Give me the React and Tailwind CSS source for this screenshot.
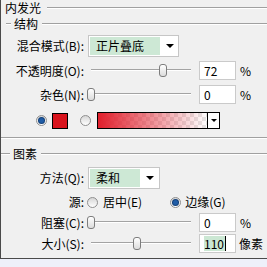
const Groove = ({ className = '' }) => (
  <div className={`h-[2px] border-t border-[#a0a0a0] border-b border-b-white ${className}`} />
);

const Radio = ({ checked }) => (
  <span className="w-[11px] h-[11px] rounded-full border border-[#8f8f8f] bg-linear-to-b from-[#d6d6d6] to-white flex items-center justify-center shrink-0">
    {checked && <span className="w-[5px] h-[5px] rounded-full bg-[#1f5ca6] ring-1 ring-[#123f78]" />}
  </span>
);

const Slider = ({ pos }) => (
  <div className="relative w-[100px] h-[13px] ml-[7px] shrink-0">
    <div className="absolute left-0 right-0 top-[5px] h-[2px] border-t border-[#a3a3a3] border-b border-b-white" />
    <div
      className="absolute top-0 w-[8px] h-[13px] rounded-[3px] border border-[#7d7d7d] bg-linear-to-b from-white to-[#dcdcdc]"
      style={{ left: pos - 4 }}
    />
  </div>
);

const Field = ({ children, green }) => (
  <div className="ml-[8px] w-[37px] h-[19px] border border-[#cacaca] bg-white flex items-center pl-[4px] shrink-0">
    {green ? (
      <span className="bg-[#cbe7d3] pr-[1px] leading-[15px] border-r border-black">{children}</span>
    ) : (
      <span className="leading-[15px]">{children}</span>
    )}
  </div>
);

const Arrow = () => (
  <span className="w-0 h-0 border-l-[4px] border-r-[4px] border-t-[4px] border-l-transparent border-r-transparent border-t-black" />
);

const Label = ({ children }) => (
  <div className="w-[83px] text-right shrink-0 leading-[14px]">{children}</div>
);

const Header = ({ text, lead, leadW, h }) => (
  <div className={`${h} flex items-center`}>
    <Groove className={`${lead} ${leadW}`} />
    <span className="ml-[3px] leading-[14px]">{text}</span>
    <Groove className="flex-1 ml-[4px]" />
  </div>
);

export default function App() {
  return (
    <div className="w-[267px] h-[267px] bg-[#eef0fa] font-['Noto_Sans_CJK_SC','Microsoft_YaHei',sans-serif] text-[12px] text-black overflow-hidden">
      <div className="h-[259px] bg-[#f0f0f0] border-l border-b border-[#4a4a4a] flex flex-col">
        <div className="h-[16px] flex items-center">
          <span className="ml-[4px] leading-[14px]">内发光</span>
          <Groove className="flex-1 ml-[6px]" />
        </div>

        <Header text="结构" lead="ml-[5px]" leadW="w-[5px]" h="h-[16px]" />

        <div className="mt-[3px] h-[22px] flex items-center">
          <Label>混合模式(B):</Label>
          <div className="ml-[4px] w-[91px] h-[22px] border border-[#c6c6c6] bg-white flex">
            <div className="flex-1 m-px bg-[#cde8d5] pl-[6px] flex items-center leading-[14px]">正片叠底</div>
            <div className="w-[17px] flex items-center justify-center">
              <Arrow />
            </div>
          </div>
        </div>

        <div className="mt-[4px] h-[19px] flex items-center">
          <Label>不透明度(O):</Label>
          <Slider pos={72} />
          <Field>72</Field>
          <span className="ml-[4px] leading-[14px]">%</span>
        </div>

        <div className="mt-[5px] h-[19px] flex items-center">
          <Label>杂色(N):</Label>
          <Slider pos={0} />
          <Field>0</Field>
          <span className="ml-[4px] leading-[14px]">%</span>
        </div>

        <div className="mt-[8px] h-[17px] flex items-center pl-[35px]">
          <Radio checked />
          <div className="ml-[5px] w-[16px] h-[16px] border border-black bg-[#d9141d]" />
          <div className="ml-[12px]">
            <Radio />
          </div>
          <div className="ml-[6px] w-[123px] h-[17px] border border-black flex">
            <div className="relative flex-1 bg-[repeating-conic-gradient(#e6e6e6_0_25%,#ffffff_0_50%)] bg-[length:8px_8px]">
              <div className="absolute inset-0 bg-linear-to-r from-[#e11f2c] to-[#e11f2c00]" />
            </div>
            <div className="w-[12px] border-l border-black bg-white flex items-center justify-center">
              <span className="w-0 h-0 border-l-[3px] border-r-[3px] border-t-[3px] border-l-transparent border-r-transparent border-t-black" />
            </div>
          </div>
        </div>

        <Groove className="mt-[8px]" />

        <div className="mt-[6px]">
          <Header text="图素" lead="ml-0" leadW="w-[9px]" h="h-[18px]" />
        </div>

        <div className="mt-[4px] h-[22px] flex items-center">
          <Label>方法(Q):</Label>
          <div className="ml-[4px] w-[72px] h-[22px] border border-[#c6c6c6] bg-white flex">
            <div className="flex-1 m-px bg-[#cde8d5] pl-[6px] flex items-center leading-[14px]">柔和</div>
            <div className="w-[18px] flex items-center justify-center">
              <Arrow />
            </div>
          </div>
        </div>

        <div className="mt-[5px] h-[16px] flex items-center">
          <Label>源:</Label>
          <div className="ml-[3px]">
            <Radio />
          </div>
          <span className="ml-[5px] leading-[14px]">居中(E)</span>
          <div className="ml-[28px]">
            <Radio checked />
          </div>
          <span className="ml-[4px] leading-[14px]">边缘(G)</span>
        </div>

        <div className="mt-[3px] h-[19px] flex items-center">
          <Label>阻塞(C):</Label>
          <Slider pos={0} />
          <Field>0</Field>
          <span className="ml-[4px] leading-[14px]">%</span>
        </div>

        <div className="mt-[2px] h-[19px] flex items-center">
          <Label>大小(S):</Label>
          <Slider pos={46} />
          <Field green>110</Field>
          <span className="ml-[3px] leading-[14px]">像素</span>
        </div>
      </div>
    </div>
  );
}
